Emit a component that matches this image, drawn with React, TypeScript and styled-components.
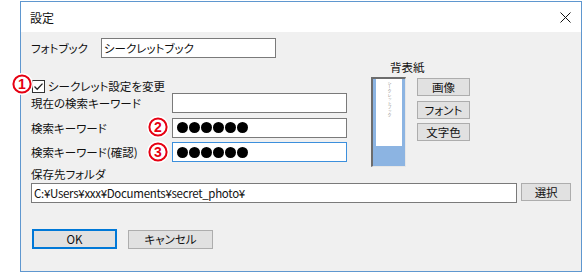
import React from "react";
import styled, { createGlobalStyle } from "styled-components";

const GlobalStyle = createGlobalStyle`
  html, body {
    margin: 0;
    padding: 0;
    background: #ffffff;
  }
  body {
    font-family: "Noto Sans CJK JP", "Noto Sans", sans-serif;
    font-size: 11.5px;
    font-feature-settings: "palt";
    color: #111111;
  }
`;

const Window = styled.div`
  box-sizing: border-box;
  margin: 1px 0 0 20px;
  width: 562px;
  height: 271px;
  border: 1px solid #5f97cf;
  background: #f0f0f0;
  display: flex;
  flex-direction: column;
`;

const TitleBar = styled.div`
  height: 30px;
  background: #ffffff;
  display: flex;
  align-items: center;
  justify-content: space-between;
  padding: 0 10px 0 9px;
  font-size: 12px;
`;

const Body = styled.div`
  padding: 6px 10px 0 10px;
  display: flex;
  flex-direction: column;
`;

const Row = styled.div`
  position: relative;
  display: flex;
  align-items: center;
  height: 20px;
`;

const Label = styled.div<{ $w: number }>`
  width: ${(p) => p.$w}px;
  flex: none;
  white-space: nowrap;
`;

const TextBox = styled.div<{ $w: number; $focus?: boolean; $tight?: boolean }>`
  box-sizing: border-box;
  width: ${(p) => p.$w}px;
  height: 20px;
  background: #ffffff;
  border: 1px solid ${(p) => (p.$focus ? "#3c8fdc" : "#7a7a7a")};
  display: flex;
  align-items: center;
  padding-left: 2px;
  white-space: nowrap;
  overflow: hidden;
  letter-spacing: ${(p) => (p.$tight ? "-0.3px" : "normal")};
`;

const Dots = styled.div`
  display: flex;
  gap: 1px;
  padding-left: 2px;
`;

const Dot = styled.span`
  width: 11px;
  height: 11px;
  border-radius: 50%;
  background: #000000;
`;

const Middle = styled.div`
  display: flex;
  margin-top: 2px;
`;

const LeftCol = styled.div`
  width: 316px;
  padding-top: 19px;
  display: flex;
  flex-direction: column;
`;

const CheckRow = styled.div`
  position: relative;
  display: flex;
  align-items: center;
  height: 14px;
  margin-left: 1px;
  gap: 3px;
`;

const Fields = styled.div`
  display: flex;
  flex-direction: column;
  gap: 4.5px;
`;

const RightCol = styled.div`
  margin-left: 24px;
  display: flex;
  flex-direction: column;
`;

const Heading = styled.div`
  height: 14px;
  line-height: 14px;
  padding-left: 19px;
`;

const PreviewArea = styled.div`
  display: flex;
  margin-top: 3px;
`;

const Preview = styled.div`
  box-sizing: border-box;
  width: 35px;
  height: 90px;
  border-style: solid;
  border-width: 2px 1px 1px 2px;
  border-color: #6d6d6d #e6e6e6 #e6e6e6 #6d6d6d;
  background: #8cb4e2;
  padding: 0 3px;
`;

const Paper = styled.div`
  height: 67px;
  background: #ffffff;
  display: flex;
  justify-content: center;
  padding-top: 2px;
  box-sizing: border-box;
`;

const SpineText = styled.span`
  writing-mode: vertical-rl;
  font-size: 4px;
  line-height: 5px;
  color: #8a8a8a;
`;

const ButtonStack = styled.div`
  display: flex;
  flex-direction: column;
  gap: 4.5px;
  margin: 1px 0 0 11px;
`;

const Button = styled.div<{ $w: number; $h?: number; $default?: boolean }>`
  box-sizing: border-box;
  width: ${(p) => p.$w}px;
  height: ${(p) => p.$h ?? 18}px;
  background: #e1e1e1;
  border: 1px solid ${(p) => (p.$default ? "#0078d7" : "#adadad")};
  box-shadow: ${(p) => (p.$default ? "inset 0 0 0 1px #0078d7" : "none")};
  display: flex;
  align-items: center;
  justify-content: center;
  white-space: nowrap;
`;

const FolderLabel = styled.div`
  height: 14px;
  line-height: 14px;
`;

const FolderRow = styled.div`
  display: flex;
  align-items: flex-start;
  gap: 4px;
  margin-top: 2px;
`;

const Actions = styled.div`
  display: flex;
  align-items: center;
  gap: 11px;
  margin: 26px 0 0 1px;
`;

const BadgeWrap = styled.div<{ $x: number; $y: number }>`
  position: absolute;
  left: ${(p) => p.$x}px;
  top: ${(p) => p.$y}px;
  width: 22px;
  height: 22px;
  z-index: 2;
`;

const Badge = ({ n, x, y }: { n: number; x: number; y: number }) => (
  <BadgeWrap $x={x} $y={y}>
    <svg width="22" height="22" viewBox="0 0 22 22">
      <circle cx="11" cy="11" r="9.5" fill="#ffffff" stroke="#ffffff" strokeWidth="3" />
      <circle cx="11" cy="11" r="8.6" fill="#ffffff" stroke="#e60012" strokeWidth="2" />
      <text
        x="11"
        y="16"
        textAnchor="middle"
        fontFamily="Liberation Sans, Arial, sans-serif"
        fontWeight="bold"
        fontSize="14"
        fill="#e60012"
      >
        {n}
      </text>
    </svg>
  </BadgeWrap>
);

const CheckBox = () => (
  <svg width="13" height="13" viewBox="0 0 13 13">
    <rect x="0.5" y="0.5" width="12" height="12" fill="#ffffff" stroke="#333333" />
    <path d="M2.5 6.5 L5.2 9.2 L10.5 3.6" fill="none" stroke="#222222" strokeWidth="1.3" />
  </svg>
);

const CloseIcon = () => (
  <svg width="11" height="11" viewBox="0 0 11 11">
    <path d="M0.5 0.5 L10.5 10.5 M10.5 0.5 L0.5 10.5" stroke="#111111" strokeWidth="1" />
  </svg>
);

const Password = () => (
  <Dots>
    {Array.from({ length: 6 }).map((_, i) => (
      <Dot key={i} />
    ))}
  </Dots>
);

export default function App() {
  return (
    <>
      <GlobalStyle />
      <Window>
        <TitleBar>
          <span>設定</span>
          <CloseIcon />
        </TitleBar>
        <Body>
          <Row>
            <Label $w={70}>フォトブック</Label>
            <TextBox $w={175}>シークレットブック</TextBox>
          </Row>
          <Middle>
            <LeftCol>
              <CheckRow>
                <Badge n={1} x={-21} y={-6} />
                <CheckBox />
                <span>シークレット設定を変更</span>
              </CheckRow>
              <Fields>
                <Row>
                  <Label $w={141}>現在の検索キーワード</Label>
                  <TextBox $w={175} />
                </Row>
                <Row>
                  <Label $w={141}>検索キーワード</Label>
                  <Badge n={2} x={116} y={-2} />
                  <TextBox $w={175}>
                    <Password />
                  </TextBox>
                </Row>
                <Row>
                  <Label $w={141}>検索キーワード(確認)</Label>
                  <Badge n={3} x={116} y={-1} />
                  <TextBox $w={175} $focus>
                    <Password />
                  </TextBox>
                </Row>
              </Fields>
            </LeftCol>
            <RightCol>
              <Heading>背表紙</Heading>
              <PreviewArea>
                <Preview>
                  <Paper>
                    <SpineText>シークレットブック</SpineText>
                  </Paper>
                </Preview>
                <ButtonStack>
                  <Button $w={53}>画像</Button>
                  <Button $w={53}>フォント</Button>
                  <Button $w={53}>文字色</Button>
                </ButtonStack>
              </PreviewArea>
            </RightCol>
          </Middle>
          <FolderLabel>保存先フォルダ</FolderLabel>
          <FolderRow>
            <TextBox $w={489} $tight>
              C:¥Users¥xxx¥Documents¥secret_photo¥
            </TextBox>
            <Button $w={50}>選択</Button>
          </FolderRow>
          <Actions>
            <Button $w={85} $h={20} $default>
              OK
            </Button>
            <Button $w={85} $h={19}>
              キャンセル
            </Button>
          </Actions>
        </Body>
      </Window>
    </>
  );
}
